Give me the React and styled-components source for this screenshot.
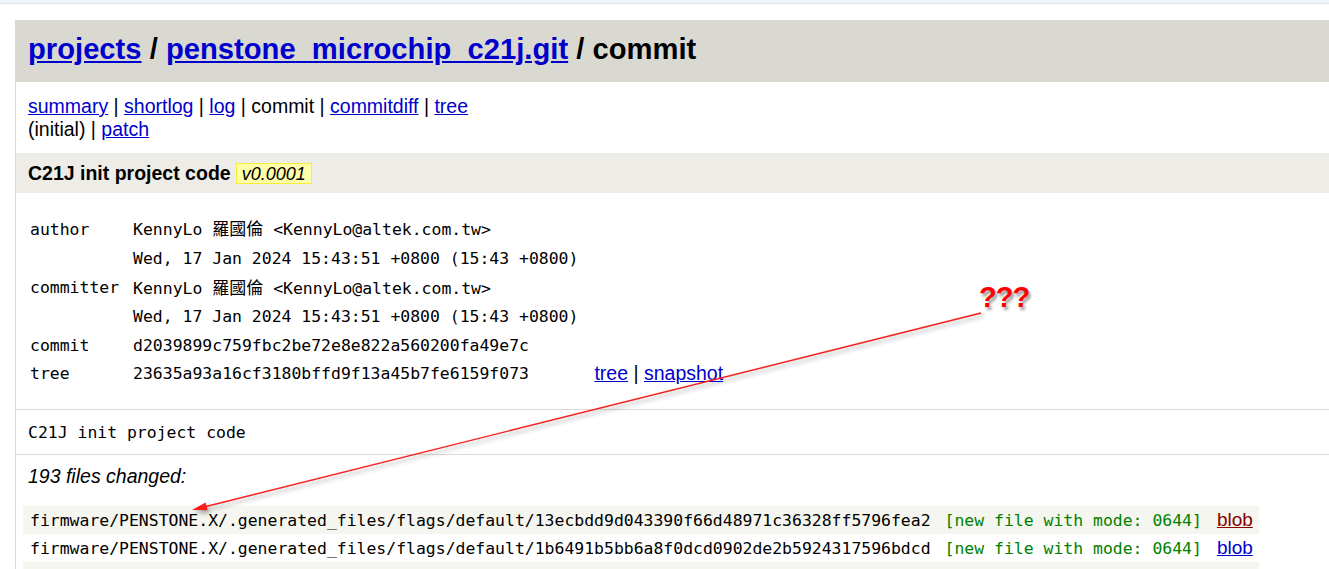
import styled, { createGlobalStyle } from "styled-components";

const GlobalStyle = createGlobalStyle`
  html, body {
    margin: 0;
    padding: 0;
    background: #ffffff;
    overflow: hidden;
  }
  body {
    font-family: "Liberation Sans", Arial, sans-serif;
    color: #000000;
  }
`;

const MONO = `"DejaVu Sans Mono", "Noto Sans CJK TC", monospace`;

const Root = styled.div`
  position: relative;
  width: 1329px;
  height: 569px;
  overflow: hidden;
`;

const TopStrip = styled.div`
  height: 3px;
  background: #eef6fa;
  border-bottom: 1px solid #dbe7ec;
`;

const Page = styled.div`
  margin: 16px -20px 0 15px;
  border-left: 1px solid #d9d8d1;
`;

const Link = styled.a`
  color: ${(p) => (p.$visited ? "#880000" : "#0000cc")};
  text-decoration: underline;
  cursor: pointer;
`;

const Header = styled.div`
  height: 62px;
  box-sizing: border-box;
  padding: 0 12px 3px;
  display: flex;
  align-items: center;
  background: #d9d8d1;
  font-size: 29.2px;
  font-weight: bold;
  white-space: pre;
`;

const Nav = styled.div`
  padding: 13px 12px 12px;
  font-size: 19.5px;
  line-height: 23px;
`;

const TitleBar = styled.div`
  height: 40px;
  box-sizing: border-box;
  padding: 0 12px;
  display: flex;
  align-items: center;
  background: #edece6;
  font-size: 19.5px;
  font-weight: bold;
`;

const Tag = styled.span`
  margin-left: 5px;
  padding: 0 5px;
  height: 21px;
  line-height: 20px;
  box-sizing: border-box;
  background: #ffffaa;
  border: 1px solid #f5ee3a;
  font-weight: normal;
  font-style: italic;
  font-size: 18px;
`;

const InfoWrap = styled.div`
  padding: 21px 0 22px 7px;
`;

const InfoTable = styled.table`
  border-collapse: collapse;
  font-family: ${MONO};
  font-size: 16.45px;
`;

const Cell = styled.td`
  padding: 0 7px;
  height: ${(p) => p.$h || 28}px;
  white-space: nowrap;
  vertical-align: middle;
`;

const LinkCell = styled(Cell)`
  font-family: "Liberation Sans", Arial, sans-serif;
  font-size: 19.5px;
  padding-left: 9px;
`;

const Cjk = styled.span`
  font-family: "Noto Sans CJK TC", sans-serif;
  font-size: 17px;
  line-height: 1;
`;

const Message = styled.div`
  height: 46px;
  box-sizing: border-box;
  padding: 0 12px;
  display: flex;
  align-items: center;
  border-top: 1px solid #d9d8d1;
  border-bottom: 1px solid #d9d8d1;
  font-family: ${MONO};
  font-size: 16.45px;
`;

const Changed = styled.div`
  padding: 10px 12px 0;
  font-size: 19.5px;
  line-height: 23px;
  font-style: italic;
`;

const FileWrap = styled.div`
  padding: 18px 0 0 7px;
`;

const FileTable = styled.table`
  border-collapse: collapse;
  font-family: ${MONO};
  font-size: 16.45px;
`;

const FileRow = styled.tr`
  background: ${(p) => (p.$odd ? "#f6f6f0" : "#ffffff")};
`;

const Mode = styled.span`
  color: #008000;
`;

const BlobCell = styled(Cell)`
  font-family: "Liberation Sans", Arial, sans-serif;
  font-size: 19px;
  padding: 0 6px 0 8px;
`;

const Overlay = styled.svg`
  position: absolute;
  left: 0;
  top: 0;
  pointer-events: none;
  filter: drop-shadow(2px 3px 2px rgba(0, 0, 0, 0.35));
`;

const Marks = styled.div`
  position: absolute;
  left: 979px;
  top: 281px;
  color: #ff0000;
  font-size: 29px;
  font-weight: bold;
  letter-spacing: -1px;
  text-shadow: 2px 3px 3px rgba(0, 0, 0, 0.4);
`;

const files = [
  "firmware/PENSTONE.X/.generated_files/flags/default/13ecbdd9d043390f66d48971c36328ff5796fea2",
  "firmware/PENSTONE.X/.generated_files/flags/default/1b6491b5bb6a8f0dcd0902de2b5924317596bdcd",
  "firmware/PENSTONE.X/.generated_files/flags/default/1f3a0c2b7d5e9a41c86f0e2d3b4a5c6d7e8f9012",
  "firmware/PENSTONE.X/.generated_files/flags/default/2a7c5e91d3b0f4468e2c1a9b7d5f3e1c0b9a8d76",
];

export default function App() {
  return (
    <Root>
      <GlobalStyle />
      <TopStrip />
      <Page>
        <Header>
          <Link>projects</Link> / <Link>penstone_microchip_c21j.git</Link> / commit
        </Header>
        <Nav>
          <Link>summary</Link> | <Link>shortlog</Link> | <Link>log</Link> | commit |{" "}
          <Link>commitdiff</Link> | <Link>tree</Link>
          <br />
          (initial) | <Link>patch</Link>
        </Nav>
        <TitleBar>
          C21J init project code <Tag>v0.0001</Tag>
        </TitleBar>
        <InfoWrap>
          <InfoTable>
            <tbody>
              <tr>
                <Cell $h={30}>author</Cell>
                <Cell $h={30}>
                  KennyLo <Cjk>羅國倫</Cjk> &lt;KennyLo@altek.com.tw&gt;
                </Cell>
                <Cell rowSpan={2} />
              </tr>
              <tr>
                <Cell $h={29} />
                <Cell $h={29}>Wed, 17 Jan 2024 15:43:51 +0800 (15:43 +0800)</Cell>
              </tr>
              <tr>
                <Cell $h={29}>committer</Cell>
                <Cell $h={29}>
                  KennyLo <Cjk>羅國倫</Cjk> &lt;KennyLo@altek.com.tw&gt;
                </Cell>
                <Cell rowSpan={2} />
              </tr>
              <tr>
                <Cell $h={29} />
                <Cell $h={29}>Wed, 17 Jan 2024 15:43:51 +0800 (15:43 +0800)</Cell>
              </tr>
              <tr>
                <Cell>commit</Cell>
                <Cell>d2039899c759fbc2be72e8e822a560200fa49e7c</Cell>
                <Cell />
              </tr>
              <tr>
                <Cell>tree</Cell>
                <Cell>23635a93a16cf3180bffd9f13a45b7fe6159f073</Cell>
                <LinkCell>
                  <Link>tree</Link> | <Link>snapshot</Link>
                </LinkCell>
              </tr>
            </tbody>
          </InfoTable>
        </InfoWrap>
        <Message>C21J init project code</Message>
        <Changed>193 files changed:</Changed>
        <FileWrap>
          <FileTable>
            <tbody>
              {files.map((f, i) => (
                <FileRow key={f} $odd={i % 2 === 0}>
                  <Cell>{f}</Cell>
                  <Cell>
                    <Mode>[new file with mode: 0644]</Mode>
                  </Cell>
                  <BlobCell>
                    <Link $visited={i === 0}>blob</Link>
                  </BlobCell>
                </FileRow>
              ))}
            </tbody>
          </FileTable>
        </FileWrap>
      </Page>
      <Overlay width="1329" height="569" viewBox="0 0 1329 569">
        <line x1="981" y1="313" x2="204" y2="507" stroke="#ff1a1a" strokeWidth="1.4" />
        <polygon points="192,510 207.6,510.3 205.6,502.5" fill="#ff1a1a" />
      </Overlay>
      <Marks>???</Marks>
    </Root>
  );
}
